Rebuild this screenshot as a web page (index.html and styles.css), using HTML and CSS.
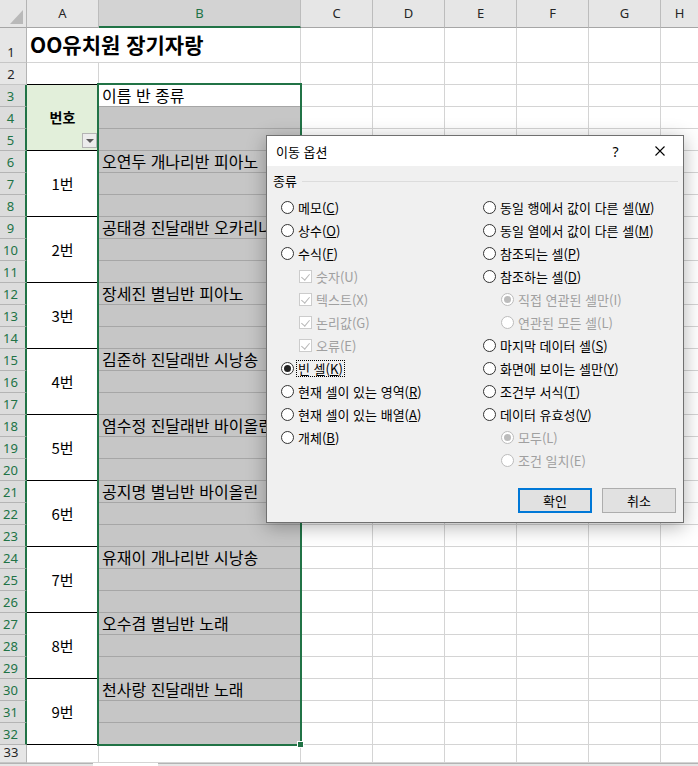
FILE: index.html
```html
<!DOCTYPE html>
<html lang="ko">
<head>
    <meta charset="UTF-8">
    <title>OO유치원 장기자랑 - 이동 옵션</title>
    <link rel="stylesheet" href="styles.css">
</head>
<body>
    <div class="workbook">
        <div class="sheet" id="sheet"></div>
        <div class="selection"><span class="fill-handle"></span></div>
        <div class="tabs">
            <span class="tab-bar"></span>
            <span class="tab-active"></span>
            <span class="tab-rest"></span>
        </div>

        <!-- 이동 옵션 대화상자 -->
        <div class="dialog">
            <div class="titlebar">
                <span class="dialog-title">이동 옵션</span>
                <span class="caption-btn help">?</span>
                <span class="caption-btn">
                    <svg width="10" height="10" viewBox="0 0 10 10"><path d="M0.5 0.5L9.5 9.5M9.5 0.5L0.5 9.5" stroke="#000" stroke-width="1.1" fill="none"/></svg>
                </span>
            </div>
            <div class="dialog-body">
                <div class="group-label"><span>종류</span><span class="rule"></span></div>
                <div class="options">
                    <div class="option-col">
                        <div class="opt"><span class="radio"></span>메모(<u>C</u>)</div>
                        <div class="opt"><span class="radio"></span>상수(<u>O</u>)</div>
                        <div class="opt"><span class="radio"></span>수식(<u>F</u>)</div>
                        <div class="opt sub off"><span class="check"></span>숫자(U)</div>
                        <div class="opt sub off"><span class="check"></span>텍스트(X)</div>
                        <div class="opt sub off"><span class="check"></span>논리값(G)</div>
                        <div class="opt sub off"><span class="check"></span>오류(E)</div>
                        <div class="opt"><span class="radio on"></span><span class="focus">빈 셀(<u>K</u>)</span></div>
                        <div class="opt"><span class="radio"></span>현재 셀이 있는 영역(<u>R</u>)</div>
                        <div class="opt"><span class="radio"></span>현재 셀이 있는 배열(<u>A</u>)</div>
                        <div class="opt"><span class="radio"></span>개체(<u>B</u>)</div>
                    </div>
                    <div class="option-col">
                        <div class="opt"><span class="radio"></span>동일 행에서 값이 다른 셀(<u>W</u>)</div>
                        <div class="opt"><span class="radio"></span>동일 열에서 값이 다른 셀(<u>M</u>)</div>
                        <div class="opt"><span class="radio"></span>참조되는 셀(<u>P</u>)</div>
                        <div class="opt"><span class="radio"></span>참조하는 셀(<u>D</u>)</div>
                        <div class="opt sub off"><span class="radio on"></span>직접 연관된 셀만(I)</div>
                        <div class="opt sub off"><span class="radio"></span>연관된 모든 셀(L)</div>
                        <div class="opt"><span class="radio"></span>마지막 데이터 셀(<u>S</u>)</div>
                        <div class="opt"><span class="radio"></span>화면에 보이는 셀만(<u>Y</u>)</div>
                        <div class="opt"><span class="radio"></span>조건부 서식(<u>T</u>)</div>
                        <div class="opt"><span class="radio"></span>데이터 유효성(<u>V</u>)</div>
                        <div class="opt sub off"><span class="radio on"></span>모두(L)</div>
                        <div class="opt sub off"><span class="radio"></span>조건 일치(E)</div>
                    </div>
                </div>
                <div class="buttons">
                    <button class="btn default">확인</button>
                    <button class="btn">취소</button>
                </div>
            </div>
        </div>
    </div>

    <script>
        // 장기자랑 참가자 목록
        const entries = [
            '오연두 개나리반 피아노',
            '공태경 진달래반 오카리나',
            '장세진 별님반 피아노',
            '김준하 진달래반 시낭송',
            '염수정 진달래반 바이올린',
            '공지명 별님반 바이올린',
            '유재이 개나리반 시낭송',
            '오수겸 별님반 노래',
            '천사랑 진달래반 노래'
        ];
        const cols = ['A', 'B', 'C', 'D', 'E', 'F', 'G', 'H'];
        const sheet = document.getElementById('sheet');

        function cell(cls, text) {
            const d = document.createElement('div');
            d.className = 'cell ' + cls;
            if (text) d.textContent = text;
            sheet.appendChild(d);
            return d;
        }

        // 열 머리글
        cell('corner');
        cols.forEach(c => cell('col-head' + (c === 'B' ? ' active' : ''), c));

        for (let r = 1; r <= 33; r++) {
            const selected = r >= 3 && r <= 32;
            cell('row-head' + (selected ? ' active' : ''), String(r));

            if (r === 1) {
                // 제목은 A1:B1 에 걸침
                cell('sheet-title', 'OO유치원 장기자랑');
            } else if (r === 2) {
                cell('edge');
                cell('');
            } else if (r === 3) {
                const head = cell('label-head', '번호');
                const btn = document.createElement('span');
                btn.className = 'filter-btn';
                head.appendChild(btn);
                cell('b-text', '이름 반 종류');
            } else if (selected) {
                const k = r - 6;
                if (k >= 0 && k % 3 === 0) {
                    cell('num', (k / 3 + 1) + '번');
                    cell('shade b-text', entries[k / 3]);
                } else {
                    cell('shade');
                }
            } else {
                cell('');
                cell('');
            }

            for (let c = 0; c < 6; c++) cell('');
        }
    </script>
</body>
</html>
```

FILE: styles.css
```css
* {
    box-sizing: border-box;
}
body {
    margin: 0;
    width: 698px;
    height: 766px;
    overflow: hidden;
    background: #fff;
    font-family: "Noto Sans CJK KR", sans-serif;
}
.workbook {
    position: relative;
}

/* 시트 */
.sheet {
    display: grid;
    grid-template-columns: 27px 72px 202px 72px 72px 72px 72px 72px 38px;
    grid-template-rows: 28px 35px repeat(31, 22px) 18px;
}
.cell {
    border-right: 1px solid #d4d4d4;
    border-bottom: 1px solid #d4d4d4;
    padding: 0 3px;
    font-size: 14px;
    line-height: 21px;
    white-space: nowrap;
    color: #000;
}
.corner {
    background: #e6e6e6;
    border-right: 1px solid #b4b4b4;
    border-bottom: 1px solid #a6a6a6;
    display: flex;
    align-items: flex-end;
    justify-content: flex-end;
    padding: 0 3px 3px 0;
}
.corner::after {
    content: '';
    width: 13px;
    height: 14px;
    background: #b9b9b9;
    clip-path: polygon(100% 0, 100% 100%, 0 100%);
}
.col-head {
    background: #e6e6e6;
    border-right: 1px solid #bcbcbc;
    border-bottom: 1px solid #a6a6a6;
    font-family: "Noto Sans", sans-serif;
    font-size: 13px;
    line-height: 27px;
    text-align: center;
    color: #262626;
}
.col-head.active {
    background: #d3d3d3;
    color: #217346;
    border-bottom: 2px solid #217346;
    line-height: 26px;
}
.row-head {
    background: #e6e6e6;
    border-right: 1px solid #b4b4b4;
    border-bottom: 1px solid #c6c6c6;
    font-family: "Noto Sans", sans-serif;
    font-size: 13px;
    line-height: 19px;
    color: #262626;
    display: flex;
    align-items: flex-end;
    justify-content: center;
    padding: 0 4px 0 0;
}
.row-head.active {
    background: #dcdcdc;
    color: #217346;
    border-right: 2px solid #217346;
    border-bottom-color: #b4b4b4;
}
.sheet-title {
    grid-column: span 2;
    font-size: 21px;
    font-weight: 700;
    line-height: 32px;
}
.edge {
    border-bottom-color: #000;
}
.label-head {
    grid-row: span 3;
    position: relative;
    background: #e2efda;
    border-right-color: #000;
    border-bottom-color: #000;
    font-weight: 700;
    display: flex;
    align-items: center;
    justify-content: center;
}
.filter-btn {
    position: absolute;
    right: 1px;
    bottom: 2px;
    width: 15px;
    height: 15px;
    background: #ececec;
    border: 1px solid #b4b4b4;
    display: flex;
    align-items: center;
    justify-content: center;
}
.filter-btn::after {
    content: '';
    border-left: 4px solid transparent;
    border-right: 4px solid transparent;
    border-top: 4px solid #595959;
}
.num {
    grid-row: span 3;
    border-right-color: #000;
    border-bottom-color: #000;
    font-size: 15px;
    display: flex;
    align-items: center;
    justify-content: center;
}
.b-text {
    font-size: 16px;
    border-bottom-color: #a6a6a6;
}
.shade {
    background: #c6c6c6;
    border-bottom-color: #a6a6a6;
}

/* 선택 영역 */
.selection {
    position: absolute;
    left: 97px;
    top: 83px;
    width: 205px;
    height: 663px;
    border: 2px solid #217346;
    pointer-events: none;
}
.fill-handle {
    position: absolute;
    right: -4px;
    bottom: -4px;
    width: 7px;
    height: 7px;
    background: #217346;
    border: 1px solid #fff;
}

.tabs {
    display: flex;
    height: 4px;
}
.tab-bar {
    width: 93px;
    background: #e6e6e6;
    border-top: 1px solid #b4b4b4;
}
.tab-active {
    width: 65px;
    background: #fff;
}
.tab-rest {
    flex: 1;
    background: #e6e6e6;
    border-top: 1px solid #b4b4b4;
}

/* 대화상자 */
.dialog {
    position: absolute;
    left: 266px;
    top: 135px;
    width: 418px;
    height: 388px;
    background: #f0f0f0;
    border: 1px solid #707070;
    box-shadow: 0 4px 18px rgba(0, 0, 0, 0.3);
    font-size: 13px;
    color: #000;
}
.titlebar {
    height: 30px;
    background: #fff;
    display: flex;
    align-items: center;
    padding-left: 9px;
}
.dialog-title {
    flex: 1;
}
.caption-btn {
    width: 46px;
    height: 30px;
    display: flex;
    align-items: center;
    justify-content: center;
}
.help {
    font-family: "Noto Sans", sans-serif;
    font-size: 14px;
    padding-left: 3px;
}
.dialog-body {
    padding: 8px 5px 0 6px;
}
.group-label {
    display: flex;
    align-items: center;
    height: 14px;
    line-height: 14px;
}
.rule {
    flex: 1;
    height: 1px;
    margin-left: 5px;
    background: #dcdcdc;
}
.options {
    display: grid;
    grid-template-columns: 202px 1fr;
    margin-top: 8px;
    padding-left: 8px;
}
.opt {
    display: flex;
    align-items: center;
    height: 23px;
    line-height: 15px;
    white-space: nowrap;
}
.opt u {
    text-decoration-thickness: 1px;
    text-underline-offset: 1px;
}
.sub {
    padding-left: 18px;
}
.off {
    color: #a0a0a0;
}
.radio {
    flex: none;
    width: 13px;
    height: 13px;
    margin-right: 4px;
    border: 1px solid #333;
    border-radius: 50%;
    background: #fff;
    display: flex;
    align-items: center;
    justify-content: center;
}
.radio.on::after {
    content: '';
    width: 7px;
    height: 7px;
    border-radius: 50%;
    background: #222;
}
.off .radio {
    border-color: #bcbcbc;
}
.off .radio.on::after {
    background: #bcbcbc;
}
.check {
    flex: none;
    width: 13px;
    height: 13px;
    margin-right: 4px;
    border: 1px solid #cccccc;
    background: #fff;
    display: flex;
    justify-content: center;
}
.check::after {
    content: '';
    width: 4px;
    height: 7px;
    margin-top: 1px;
    border-right: 1.5px solid #b8b8b8;
    border-bottom: 1.5px solid #b8b8b8;
    transform: rotate(40deg);
}
.focus {
    border: 1px dotted #000;
    margin-left: -2px;
    padding: 0 1px;
}
.buttons {
    display: flex;
    justify-content: flex-end;
    gap: 10px;
    margin-top: 16px;
    padding-right: 2px;
}
.btn {
    width: 74px;
    height: 25px;
    padding: 0;
    background: #e1e1e1;
    border: 1px solid #adadad;
    font-family: inherit;
    font-size: 13px;
    color: #000;
}
.btn.default {
    border: 2px solid #0078d7;
}
```
